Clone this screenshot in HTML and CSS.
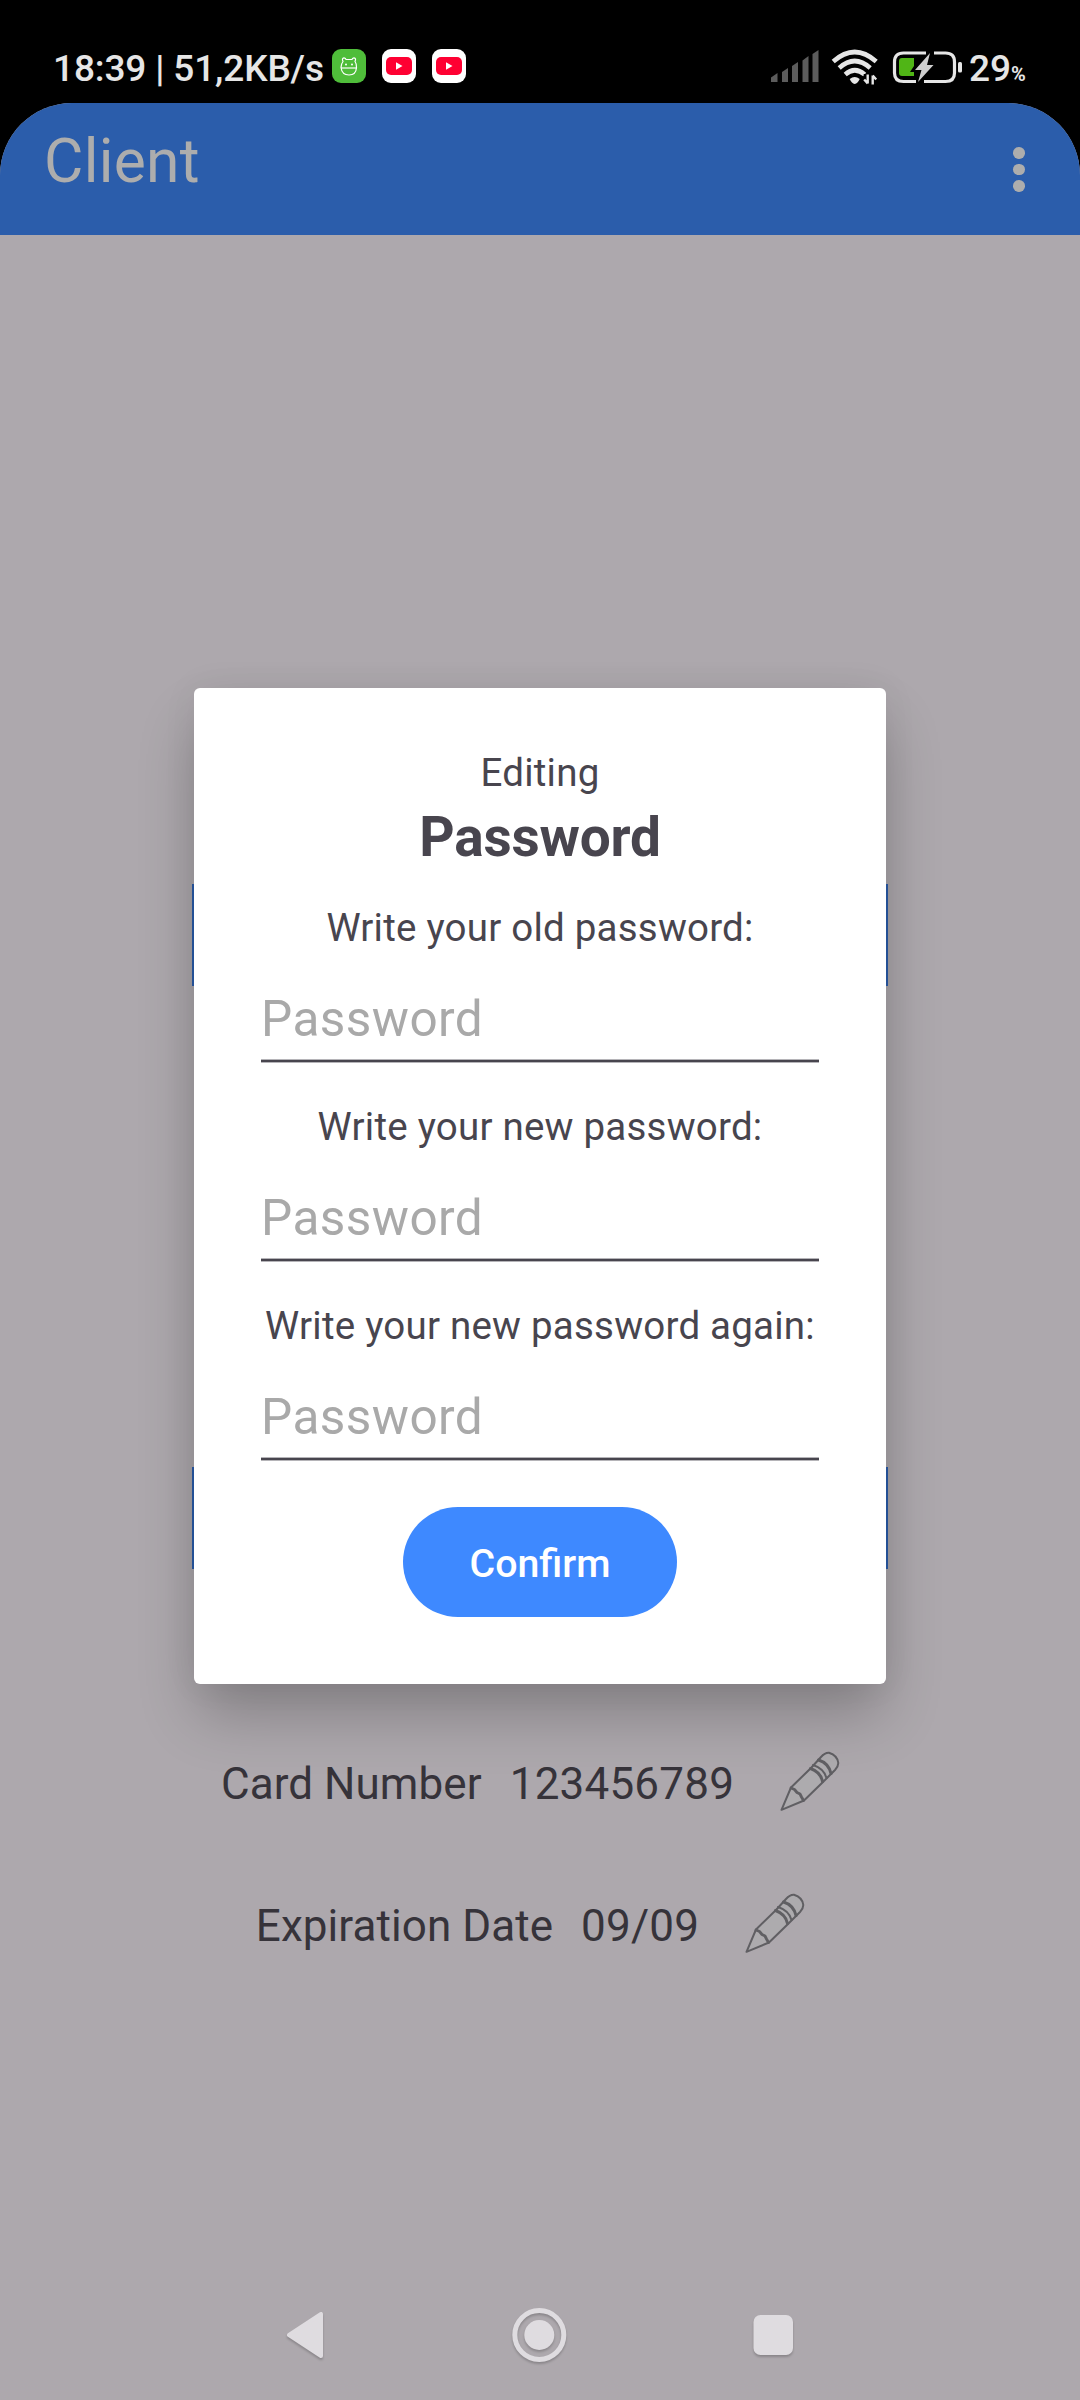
FILE: index.html
```html
<!DOCTYPE html>
<html lang="en">
<head>
<meta charset="utf-8">
<title>Client</title>
<link rel="stylesheet" href="styles.css">
</head>
<body>
<svg width="0" height="0" class="defs">
  <symbol id="pencil" viewBox="0 0 100 100">
    <g fill="none" stroke="#605f63" stroke-width="2" stroke-linejoin="round" stroke-linecap="round">
      <path d="M22.500 79.800L32 57.500L52 38L62 27Q66 22.500 70 22.800Q78.500 25.500 79.300 33Q79.300 36.500 76 40L64 52L45 70.500Z" fill="#adabae"/>
      <path d="M32 58L35.500 59.500L38 62.500L41 64L42.500 67L44.500 70.500" stroke-width="2.800"/>
      <path d="M51.500 38.500Q61.500 42 63.500 51.500" stroke-width="3"/>
      <path d="M54 35Q65 38.500 67.500 48"/>
      <path d="M59.500 30Q69.500 33 72 43.500" stroke-width="3"/>
    </g>
  </symbol>
  <symbol id="video" viewBox="0 0 34 34">
    <rect width="34" height="34" rx="9" fill="#fff"/>
    <rect x="4" y="8" width="26" height="18" rx="5" fill="#fe0032"/>
    <path d="M14 13.200L20.500 17L14 20.800Z" fill="#fff"/>
  </symbol>
</svg>
<div class="screen">
  <header class="status">
    <span class="clock">18:39 | 51,2KB/s</span>
    <div class="notifications">
      <svg width="34" height="34" viewBox="0 0 34 34">
        <rect width="34" height="34" rx="9" fill="#4fbd3a"/>
        <g fill="none" stroke="#fff" stroke-width="1.200">
          <path d="M11 12.500Q9.500 9 12 8.800Q13.800 9 14 10.500H20Q20.200 9 22 8.800Q24.500 9 23 12.500Q24.800 15 24.500 18.500Q24 26 17 26Q10 26 9 18.500Q9 15 11 12.500Z"/>
          <path d="M9 19H25"/>
        </g>
        <circle cx="14" cy="15.500" r="1" fill="#fff"/><circle cx="20" cy="15.500" r="1" fill="#fff"/>
      </svg>
      <svg width="34" height="34"><use href="#video"/></svg>
      <svg width="34" height="34"><use href="#video"/></svg>
    </div>
    <div class="indicators">
      <svg width="200" height="40" viewBox="0 0 200 40">
        <g fill="#5c5c5c">
          <path d="M2 28.500L8.500 24V33H2Z"/><path d="M13 23L19 19V33H13Z"/><path d="M23 17L29 13V33H23Z"/><path d="M33.500 11.500L39.500 7V33H33.500Z"/><path d="M43.500 5L49.500 1V33H43.500Z"/>
        </g>
        <g transform="translate(.7)">
          <g fill="none" stroke="#e6e6e6" stroke-width="4.600">
            <path d="M63.500 12.500Q85 -6.500 106.500 12.500"/>
            <path d="M69.500 19Q85 5 100.500 19"/>
            <path d="M75.500 25.500Q85 17 95 25.500"/>
          </g>
          <path d="M80 30Q85 26 90 30Q88 34.500 85 35Q82 34.500 80 30Z" fill="#e6e6e6"/>
          <path d="M94 30V25H107V36H94Z"/>
          <path d="M98 25.500V34.500M94.500 30.500L98 34.500M103 35.500V26.500M103 26.500L106.500 30.500" fill="none" stroke="#e6e6e6" stroke-width="2.400"/>
        </g>
        <g transform="translate(1)">
          <path d="M156 4H133.500Q124.500 4 124.500 13V24Q124.500 32.500 133.500 32.500H146M154 32.500H175.500Q184.500 32.500 184.500 24V13Q184.500 4 175.500 4H164" fill="none" stroke="#e6e6e6" stroke-width="3.200"/>
          <path d="M132 9H144V17L140 23H144V27H132Q129 27 129 24V12Q129 9 132 9Z" fill="#50b516"/>
          <path d="M160 4L145 21H151.500L148 33L163.500 16H157Z" fill="#cfcfcf"/>
          <rect x="188" y="13" width="4" height="10.500" rx="1.500" fill="#e6e6e6"/>
        </g>
      </svg>
      <span class="level">29<small>%</small></span>
    </div>
  </header>
  <div class="app">
    <header class="toolbar">
      <h1>Client</h1>
      <div class="menu"><i></i><i></i><i></i></div>
    </header>
    <main class="account">
      <div class="band"></div>
      <div class="band"></div>
      <div class="row">
        <span>Card Number</span><span class="value">123456789</span>
        <svg width="100" height="100"><use href="#pencil"/></svg>
      </div>
      <div class="row">
        <span>Expiration Date</span><span class="value">09/09</span>
        <svg width="100" height="100"><use href="#pencil"/></svg>
      </div>
    </main>
    <nav class="navbar">
      <svg width="60" height="66" viewBox="0 0 60 66"><path d="M13 33L45 12V54Z" fill="#dfdce0" stroke="#dfdce0" stroke-width="4" stroke-linejoin="round"/></svg>
      <svg width="60" height="66" viewBox="0 0 60 66"><circle cx="29.300" cy="33" r="24.500" fill="none" stroke="#dfdce0" stroke-width="5"/><circle cx="29.300" cy="33" r="15" fill="#dfdce0"/></svg>
      <svg width="60" height="66" viewBox="0 0 60 66"><rect x="9.500" y="13" width="39.500" height="40" rx="7" fill="#dfdce0"/></svg>
    </nav>
  </div>
  <section class="dialog">
    <p class="caption">Editing</p>
    <h2>Password</h2>
    <p class="label first">Write your old password:</p>
    <div class="field">Password</div>
    <p class="label">Write your new password:</p>
    <div class="field">Password</div>
    <p class="label">Write your new password again:</p>
    <div class="field">Password</div>
    <button class="confirm">Confirm</button>
  </section>
</div>
</body>
</html>
```
FILE: styles.css
```css
* { box-sizing: border-box; margin: 0; }
body { background: #000; font-family: Roboto, sans-serif; }
.defs { position: absolute; }
svg { display: block; flex: none; }

.screen {
  position: relative;
  width: 1080px;
  height: 2400px;
  overflow: hidden;
}

.status {
  display: flex;
  height: 103px;
  padding: 0 53px 0 53px;
  color: #e6e6e6;
  font-size: 37px;
  font-weight: 500;
  line-height: 44px;
  white-space: nowrap;
}
.clock { width: 279px; padding-top: 47px; letter-spacing: -.14px; }
.notifications { display: flex; gap: 16px; padding-top: 49px; }
.indicators { display: flex; margin-left: auto; }
.indicators svg { margin-top: 49px; }
.level { width: 58px; padding-top: 47px; }
.level small { font-size: 20px; font-weight: 700; }

.app {
  display: flex;
  flex-direction: column;
  height: 2297px;
  overflow: hidden;
  border-radius: 72px 72px 0 0;
  background: #ada8ad;
}
.toolbar {
  display: flex;
  justify-content: space-between;
  height: 132px;
  padding: 22px 55.5px 0 44px;
  background: #2b5dab;
  color: #adadad;
}
.toolbar h1 { padding-top: 1px; font-size: 60.5px; font-weight: 400; line-height: 72px; letter-spacing: .3px; }
.menu { display: flex; flex-direction: column; gap: 5px; padding-top: 22px; }
.menu i { width: 11.5px; height: 11.5px; border-radius: 50%; background: #adadad; }

.account {
  display: flex;
  flex: 1;
  flex-direction: column;
  align-items: center;
  padding-top: 649px;
  color: #36333a;
}
.band { width: 696px; height: 102px; margin-bottom: 481px; background: #2b5dab; }
.band + .band { margin-bottom: 161px; }
.row {
  display: flex;
  align-items: center;
  height: 100px;
  margin-bottom: 42px;
  font-size: 44px;
  line-height: 52px;
  letter-spacing: .07px;
  white-space: nowrap;
}
.row span { padding-top: 7px; }
.row .value { margin: 0 25px 0 28px; letter-spacing: .2px; }

.navbar {
  display: flex;
  gap: 174px;
  justify-content: center;
  height: 98px;
}
.navbar svg { filter: drop-shadow(0 2px 1px rgba(0, 0, 0, .2)); }

.dialog {
  position: absolute;
  top: 688px;
  left: 194px;
  display: flex;
  flex-direction: column;
  align-items: center;
  width: 692px;
  height: 996px;
  padding: 62px 67px 67px;
  border-radius: 6px;
  background: #fff;
  box-shadow: 0 34px 60px -4px rgba(0, 0, 0, .24), 0 0 36px rgba(0, 0, 0, .06);
  color: #48454e;
  white-space: nowrap;
}
.caption, .label { font-size: 38.5px; line-height: 46px; letter-spacing: .22px; }
.dialog h2 { margin-top: 9px; font-size: 55px; font-weight: 700; line-height: 64px; letter-spacing: -.2px; }
.label { margin-top: 41px; }
.label.first { margin-top: 36px; }
.field {
  width: 558px;
  height: 112px;
  padding-top: 39px;
  color: #a9a9a9;
  font-size: 49.5px;
  line-height: 58px;
  letter-spacing: .45px;
  background: linear-gradient(#b5b4b8 1px, #48454e 1px 3px, #b5b4b8 3px) bottom / 100% 4px no-repeat;
}
.confirm {
  width: 274px;
  height: 110px;
  margin-top: 46px;
  padding: 3px 0 0;
  border: 0;
  border-radius: 55px;
  background: #3e89ff;
  color: #fff;
  font: 500 39.3px/46px Roboto, sans-serif;
}
```
